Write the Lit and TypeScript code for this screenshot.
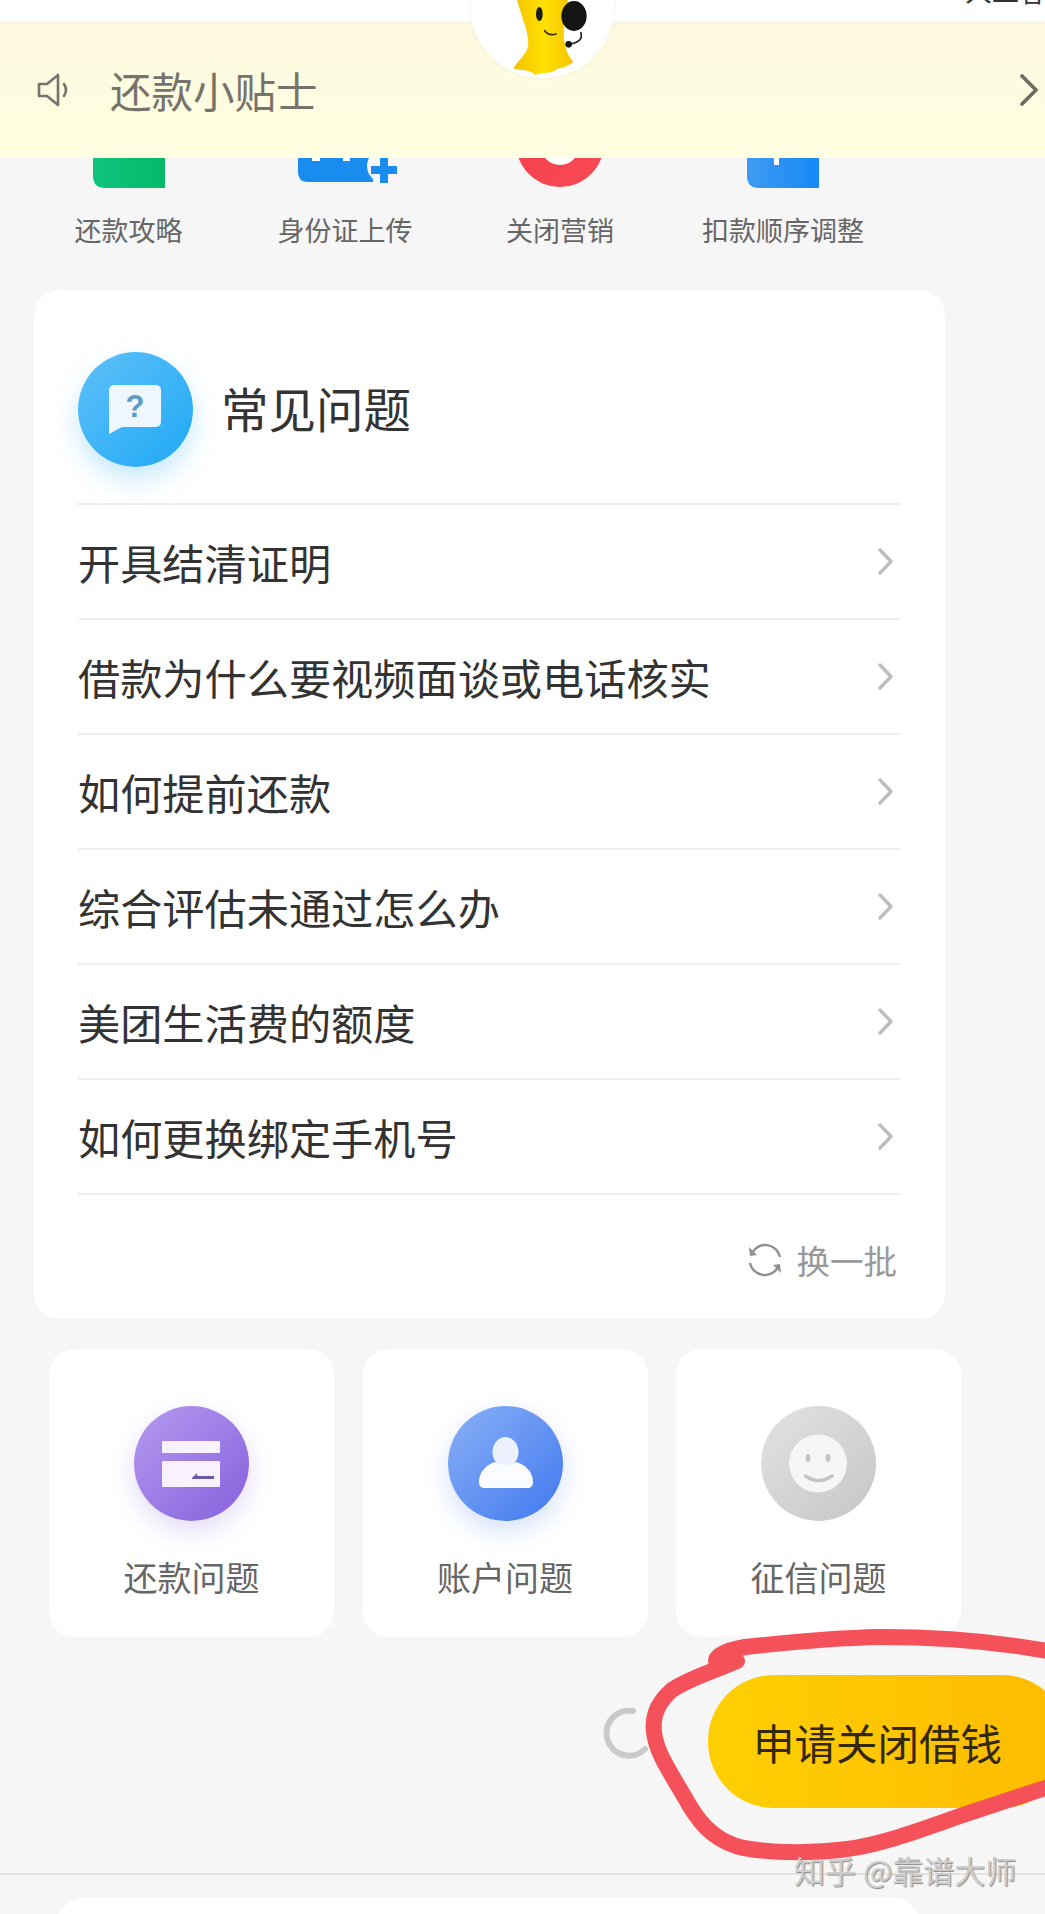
import { LitElement, html, css, svg } from 'lit'
import { customElement } from 'lit/decorators.js'

const shortcuts = ['还款攻略', '身份证上传', '关闭营销', '扣款顺序调整']
const questions = [
  '开具结清证明',
  '借款为什么要视频面谈或电话核实',
  '如何提前还款',
  '综合评估未通过怎么办',
  '美团生活费的额度',
  '如何更换绑定手机号',
]

const shortcutIcons = [
  svg`<svg width="72" height="30" viewBox="0 0 72 30"><defs><linearGradient id="g1" x1="0" x2="1"><stop offset="0" stop-color="#10c47e"/><stop offset="1" stop-color="#06b868"/></linearGradient></defs><path d="M0 -10H72V30H12Q0 30 0 18Z" fill="url(#g1)"/></svg>`,
  svg`<svg width="99" height="30" viewBox="0 0 99 30"><path d="M0 -10H75V24H10Q0 24 0 14Z" fill="#1a8cf0"/><path d="M14 0h8v3h-8zM45 0h7v3h-7z" fill="#fff"/><circle cx="86" cy="8" r="17" fill="#f6f6f6"/><path d="M82 0h8v8h9v8h-9v9h-8v-9H73V8h9Z" fill="#1a8cf0"/></svg>`,
  svg`<svg width="88" height="30" viewBox="0 0 88 30"><defs><linearGradient id="g3" x1="0" x2="1" y1="0" y2="1"><stop offset="0" stop-color="#f04049"/><stop offset="1" stop-color="#fb4a55"/></linearGradient></defs><circle cx="44" cy="-15" r="44" fill="url(#g3)"/><circle cx="44" cy="-12" r="19" fill="#fff"/></svg>`,
  svg`<svg width="72" height="30" viewBox="0 0 72 30"><defs><linearGradient id="g4" x1="0" x2="1"><stop offset="0" stop-color="#3f9bf2"/><stop offset="1" stop-color="#1489f6"/></linearGradient></defs><path d="M0 -10H72V30H12Q0 30 0 18Z" fill="url(#g4)"/><rect x="27" y="0" width="5" height="7" fill="#fff"/></svg>`,
]

@customElement('app-root')
export class AppRoot extends LitElement {
  static styles = css`
    :host {
      display: block;
      position: relative;
      width: 1045px;
      height: 1914px;
      overflow: hidden;
      background: #f6f6f6;
      font-family: 'Noto Sans CJK SC', 'Liberation Sans', sans-serif;
      color: #333;
    }

    .status {
      height: 21px;
      background: #fff;
    }
    .service {
      position: absolute;
      left: 965px;
      top: -23px;
      font-size: 27px;
      line-height: 27px;
      white-space: nowrap;
      color: #333;
    }
    .mascot {
      position: absolute;
      left: 460px;
      top: 0;
      z-index: 2;
    }

    .banner {
      height: 137px;
      display: flex;
      align-items: center;
      padding: 0 6px 0 37px;
      box-sizing: border-box;
      background: linear-gradient(#fdf9e0, #ffffe1);
      color: #77736a;
    }
    .banner-text {
      flex: 1;
      margin-left: 39px;
      font-size: 41.5px;
      line-height: 50px;
    }

    .shortcuts {
      display: grid;
      grid-template-columns: 217px 216px 214px 232px;
      padding-left: 20px;
    }
    .shortcut {
      display: flex;
      flex-direction: column;
      align-items: center;
      font-size: 27px;
      line-height: 25px;
      color: #666;
    }
    .shortcut svg {
      display: block;
      height: 30px;
      margin-bottom: 29px;
    }
    .shortcut:nth-child(2) svg {
      margin-left: 5px;
    }

    .faq {
      width: 911px;
      height: 1029px;
      margin: 48px 0 30px 34px;
      padding: 0 44px;
      box-sizing: border-box;
      background: #fff;
      border-radius: 26px;
    }
    .faq-head {
      height: 215px;
      display: flex;
      align-items: center;
      gap: 28px;
      padding-top: 22px;
      box-sizing: border-box;
      border-bottom: 2px solid #ededed;
      font-size: 47.5px;
      line-height: 60px;
    }
    .bubble {
      width: 115px;
      height: 115px;
      margin-top: 3px;
      border-radius: 50%;
      background: linear-gradient(135deg, #5fc0f8, #1fa9f6);
      box-shadow: 0 12px 26px rgba(50, 175, 250, 0.28);
    }
    .row {
      height: 115px;
      display: flex;
      align-items: center;
      justify-content: space-between;
      box-sizing: border-box;
      border-bottom: 2px solid #efefef;
      font-size: 42.2px;
      line-height: 52px;
    }
    .chevron {
      display: block;
      margin-right: 8px;
    }
    .refresh {
      height: 123px;
      display: flex;
      align-items: center;
      justify-content: flex-end;
      gap: 15px;
      padding: 6px 4px 0 0;
      box-sizing: border-box;
      font-size: 33.5px;
      line-height: 40px;
      color: #999;
    }

    .tiles {
      display: flex;
      gap: 28.5px;
      margin-left: 49px;
    }
    .tile {
      width: 285px;
      height: 288px;
      padding-top: 57px;
      box-sizing: border-box;
      display: flex;
      flex-direction: column;
      align-items: center;
      background: #fff;
      border-radius: 26px;
      font-size: 34px;
      line-height: 44px;
      color: #666;
    }
    .orb {
      width: 115px;
      height: 115px;
      margin-bottom: 34px;
      border-radius: 50%;
    }
    .orb svg,
    .bubble svg {
      display: block;
    }
    .orb.purple {
      background: linear-gradient(135deg, #b59af0, #8660dc);
      box-shadow: 0 10px 26px rgba(134, 96, 220, 0.22);
    }
    .orb.blue {
      background: linear-gradient(135deg, #8bb0f6, #3f78ee);
      box-shadow: 0 10px 26px rgba(63, 120, 238, 0.22);
    }
    .orb.grey {
      background: linear-gradient(135deg, #e2e2e2, #c6c6c6);
    }

    .actions {
      display: flex;
      align-items: center;
      gap: 53px;
      margin: 38px 0 65px 603px;
      height: 133px;
    }
    .spinner {
      display: block;
      flex: none;
      margin-top: -17px;
    }
    .apply {
      flex: none;
      width: 360px;
      height: 133px;
      padding-left: 45px;
      box-sizing: border-box;
      display: flex;
      align-items: center;
      border-radius: 66px;
      background: linear-gradient(90deg, #ffcf03, #fdbb00);
      font-size: 41.5px;
      line-height: 50px;
      color: #33290a;
      white-space: nowrap;
    }

    .rule {
      height: 2px;
      background: #e3e3e3;
      margin-bottom: 22px;
    }
    .next-card {
      height: 40px;
      margin: 0 124px 0 56px;
      background: #fff;
      border-radius: 30px 30px 0 0;
    }

    .scribble {
      position: absolute;
      left: 0;
      top: 0;
      pointer-events: none;
    }
    .watermark {
      position: absolute;
      left: 794px;
      top: 1849px;
      font-size: 31px;
      line-height: 42px;
      white-space: nowrap;
      color: #cdcdcd;
      text-shadow: 1px 1px 1px #8a8a8a;
    }
  `

  render() {
    return html`
      <div class="status"></div>
      <div class="service">人工客服</div>
      ${this.renderMascot()}

      <div class="banner">
        <svg width="34" height="34" viewBox="0 0 34 34" fill="none" stroke="#77736a" stroke-width="2.6">
          <path d="M2 11h8l11-9v30l-11-9H2Z" stroke-linejoin="round" />
          <path d="M27 11q4 6 0 12" stroke-linecap="round" />
        </svg>
        <div class="banner-text">还款小贴士</div>
        <svg width="20" height="32" viewBox="0 0 20 32" fill="none" stroke="#6d6a62" stroke-width="3.6" stroke-linecap="round" stroke-linejoin="round">
          <path d="M3 2l14 14L3 30" />
        </svg>
      </div>

      <div class="shortcuts">
        ${shortcuts.map(
          (name, i) => html`<div class="shortcut">${shortcutIcons[i]}<span>${name}</span></div>`,
        )}
      </div>

      <div class="faq">
        <div class="faq-head">
          <div class="bubble">
            <svg width="115" height="115" viewBox="0 0 115 115">
              <path d="M36 33h42a5 5 0 0 1 5 5v32a5 5 0 0 1-5 5H44L31 82V38a5 5 0 0 1 5-5Z" fill="#eef7fd" />
              <text x="57" y="65" text-anchor="middle" font-size="31" font-family="Liberation Sans" font-weight="700" fill="#5d9cc4">?</text>
            </svg>
          </div>
          <span>常见问题</span>
        </div>
        ${questions.map(
          (q) => html`<div class="row">
            <span>${q}</span>
            <svg class="chevron" width="15" height="27" viewBox="0 0 15 27" fill="none" stroke="#bdbdbd" stroke-width="3.4" stroke-linecap="round" stroke-linejoin="round">
              <path d="M2 2l11 11.500L2 25" />
            </svg>
          </div>`,
        )}
        <div class="refresh">
          <svg width="34" height="34" viewBox="0 0 34 34" fill="none" stroke="#8f8f8f" stroke-width="2.4">
            <path d="M4 10A15 15 0 0 1 32 14" />
            <path d="M30 24A15 15 0 0 1 2 20" />
            <path d="M1 4l1 9 7-1Z" fill="#8f8f8f" stroke="none" />
            <path d="M33 30l-1-9-7 1Z" fill="#8f8f8f" stroke="none" />
          </svg>
          <span>换一批</span>
        </div>
      </div>

      <div class="tiles">
        <div class="tile">
          <div class="orb purple">
            <svg width="115" height="115" viewBox="0 0 115 115">
              <rect x="28" y="35" width="58" height="12" rx="1" fill="#f7f2fd" />
              <rect x="28" y="55" width="58" height="26" rx="1" fill="#f7f2fd" />
              <path d="M58 72l5-5v3h17v3H58Z" fill="#6b58a8" />
            </svg>
          </div>
          <span>还款问题</span>
        </div>
        <div class="tile">
          <div class="orb blue">
            <svg width="115" height="115" viewBox="0 0 115 115">
              <ellipse cx="57.5" cy="46" rx="13" ry="15" fill="#eaf0fc" />
              <path d="M31 76c0-11 9-18 16-20 6 4 15 4 21 0 8 2 17 9 17 20 0 4-2 6-6 6H37c-4 0-6-2-6-6Z" fill="#fbfcff" />
            </svg>
          </div>
          <span>账户问题</span>
        </div>
        <div class="tile">
          <div class="orb grey">
            <svg width="115" height="115" viewBox="0 0 115 115">
              <circle cx="57" cy="57.5" r="29" fill="#f6f6f6" />
              <ellipse cx="47" cy="52" rx="2.500" ry="4" fill="#c4c4c4" />
              <ellipse cx="67" cy="52" rx="2.500" ry="4" fill="#c4c4c4" />
              <path d="M44.500 70q13 9 26.500 0" fill="none" stroke="#c4c4c4" stroke-width="3.400" stroke-linecap="round" />
            </svg>
          </div>
          <span>征信问题</span>
        </div>
      </div>

      <div class="actions">
        <svg class="spinner" width="52" height="52" viewBox="0 0 52 52" fill="none" stroke="#c9c9c9" stroke-width="6" stroke-linecap="round">
          <path d="M30 4A22.500 22.500 0 1 0 42 42" />
        </svg>
        <div class="apply">申请关闭借钱</div>
      </div>

      <div class="rule"></div>
      <div class="next-card"></div>

      <svg class="scribble" width="1045" height="1914" viewBox="0 0 1045 1914" fill="none" stroke="#f4515a" stroke-width="16" stroke-linecap="round" stroke-linejoin="round">
        <path d="M1052 1652C1000 1642 940 1637 880 1637C830 1638 790 1642 745 1647C728 1650 716 1655 716 1661C722 1665 732 1664 737 1661C712 1672 690 1678 672 1690C658 1702 652 1716 654 1732C656 1752 670 1772 684 1796C698 1822 712 1838 736 1846C760 1853 810 1854 847 1849C880 1845 920 1830 960 1816C990 1806 1020 1796 1052 1786" />
      </svg>
      <div class="watermark">知乎 @靠谱大师</div>
    `
  }

  // viewBox is 3x the page pixels, the mascot is cut off by the top of the screen
  renderMascot() {
    return html`<svg class="mascot" width="170" height="90" viewBox="0 0 510 270">
      <defs>
        <linearGradient id="body" x1="0" x2="1">
          <stop offset="0" stop-color="#f3c200" />
          <stop offset=".5" stop-color="#ffe000" />
          <stop offset="1" stop-color="#f6c400" />
        </linearGradient>
        <filter id="soft" x="-20%" y="-20%" width="140%" height="140%"><feGaussianBlur stdDeviation="8" /></filter>
      </defs>
      <circle cx="247" cy="19" r="216" fill="#000" opacity=".05" filter="url(#soft)" />
      <circle cx="247" cy="19" r="216" fill="#fff" />
      <path d="M170 -5C180 40 205 90 205 130C205 160 175 180 160 205C185 215 205 205 225 225C250 215 270 225 295 205C310 205 330 195 340 185C315 160 305 110 315 60L325 -5Z" fill="url(#body)" />
      <ellipse cx="342" cy="48" rx="38" ry="45" fill="#141414" />
      <ellipse cx="238" cy="42" rx="10" ry="21" fill="#1b1b1b" />
      <path d="M254 92Q265 108 288 102" fill="none" stroke="#3a2c00" stroke-width="5" stroke-linecap="round" />
      <path d="M362 96Q372 125 332 132" fill="none" stroke="#222" stroke-width="5" />
      <circle cx="326" cy="133" r="10" fill="#141414" />
    </svg>`
  }
}
